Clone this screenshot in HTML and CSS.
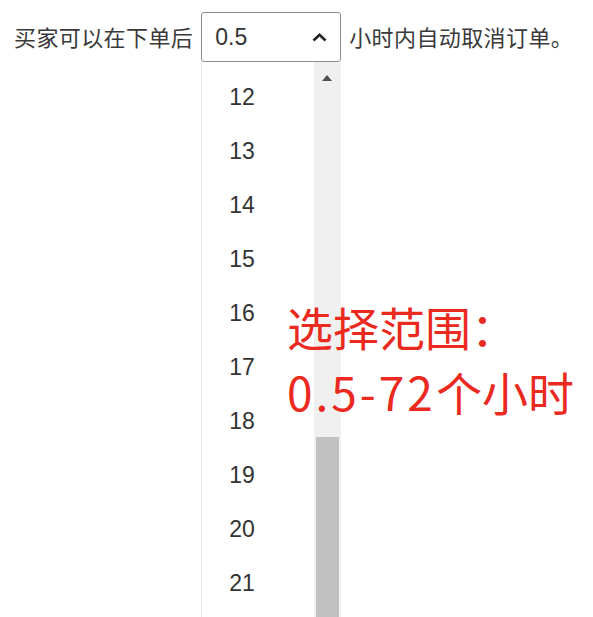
FILE: index.html
```html
<!DOCTYPE html>
<html lang="zh-CN">

<head>
    <meta charset="UTF-8">
    <title>自动取消订单设置</title>
    <link rel="stylesheet" href="styles.css">
</head>

<body>
    <div class="setting-row">
        <span class="setting-text">买家可以在下单后</span>
        <div class="select-wrap">
            <div class="select-box">
                <span class="select-value">0.5</span>
                <svg class="select-arrow" width="15" height="9" viewBox="0 0 15 9">
                    <path d="M1.5 7.5 L7.5 1.8 L13.5 7.5" fill="none" stroke="#222" stroke-width="2.6" />
                </svg>
            </div>
            <div class="dropdown">
                <ul class="option-list">
                    <li>12</li>
                    <li>13</li>
                    <li>14</li>
                    <li>15</li>
                    <li>16</li>
                    <li>17</li>
                    <li>18</li>
                    <li>19</li>
                    <li>20</li>
                    <li>21</li>
                </ul>
                <div class="scrollbar">
                    <div class="scroll-up"></div>
                    <div class="scroll-thumb"></div>
                </div>
            </div>
        </div>
        <span class="setting-text">小时内自动取消订单。</span>
    </div>
    <div class="note">选择范围：<br><span class="note-num">0.5-72</span>个小时</div>
</body>

</html>
```

FILE: styles.css
```css
body {
    margin: 0;
    padding: 0;
    height: 617px;
    overflow: hidden;
    background: #fff;
    font-family: "Liberation Sans", "Noto Sans CJK SC", sans-serif;
    color: #3a3a3a;
    position: relative;
}

.setting-row {
    display: flex;
    align-items: center;
    gap: 8px;
    padding: 12px 0 0 14px;
}

.setting-text {
    font-size: 22px;
    line-height: 30px;
    letter-spacing: 0.4px;
    padding-top: 3px;
}

.select-wrap {
    position: relative;
}

.select-box {
    box-sizing: border-box;
    width: 140px;
    height: 50px;
    border: 1px solid #8c8c8c;
    border-radius: 3px;
    display: flex;
    align-items: center;
    justify-content: space-between;
    padding: 0 13px 0 13px;
    font-size: 23px;
    color: #333;
}

.select-arrow {
    display: block;
}

.dropdown {
    position: absolute;
    top: 100%;
    left: 0;
    width: 140px;
    height: 570px;
    box-sizing: border-box;
    border-left: 1px solid #e4e4e4;
    background: #fff;
    display: flex;
    overflow: hidden;
}

.option-list {
    list-style: none;
    margin: 0;
    padding: 8px 0 0 0;
    flex: 1;
}

.option-list li {
    height: 54px;
    line-height: 54px;
    padding-left: 27px;
    font-size: 23px;
    color: #333;
}

.scrollbar {
    width: 27px;
    background: #f0f0f0;
    position: relative;
}

.scroll-up {
    position: absolute;
    top: 13px;
    left: 8px;
    width: 0;
    height: 0;
    border-left: 5.5px solid transparent;
    border-right: 5.5px solid transparent;
    border-bottom: 6px solid #505050;
}

.scroll-thumb {
    position: absolute;
    top: 375px;
    left: 2px;
    right: 2px;
    bottom: 0;
    background: #c1c1c1;
}

.note {
    position: absolute;
    left: 287px;
    top: 294px;
    font-family: "Noto Sans CJK SC", sans-serif;
    font-size: 46px;
    line-height: 65px;
    color: #ea2a1f;
}

.note-num {
    letter-spacing: 3px;
}
```
